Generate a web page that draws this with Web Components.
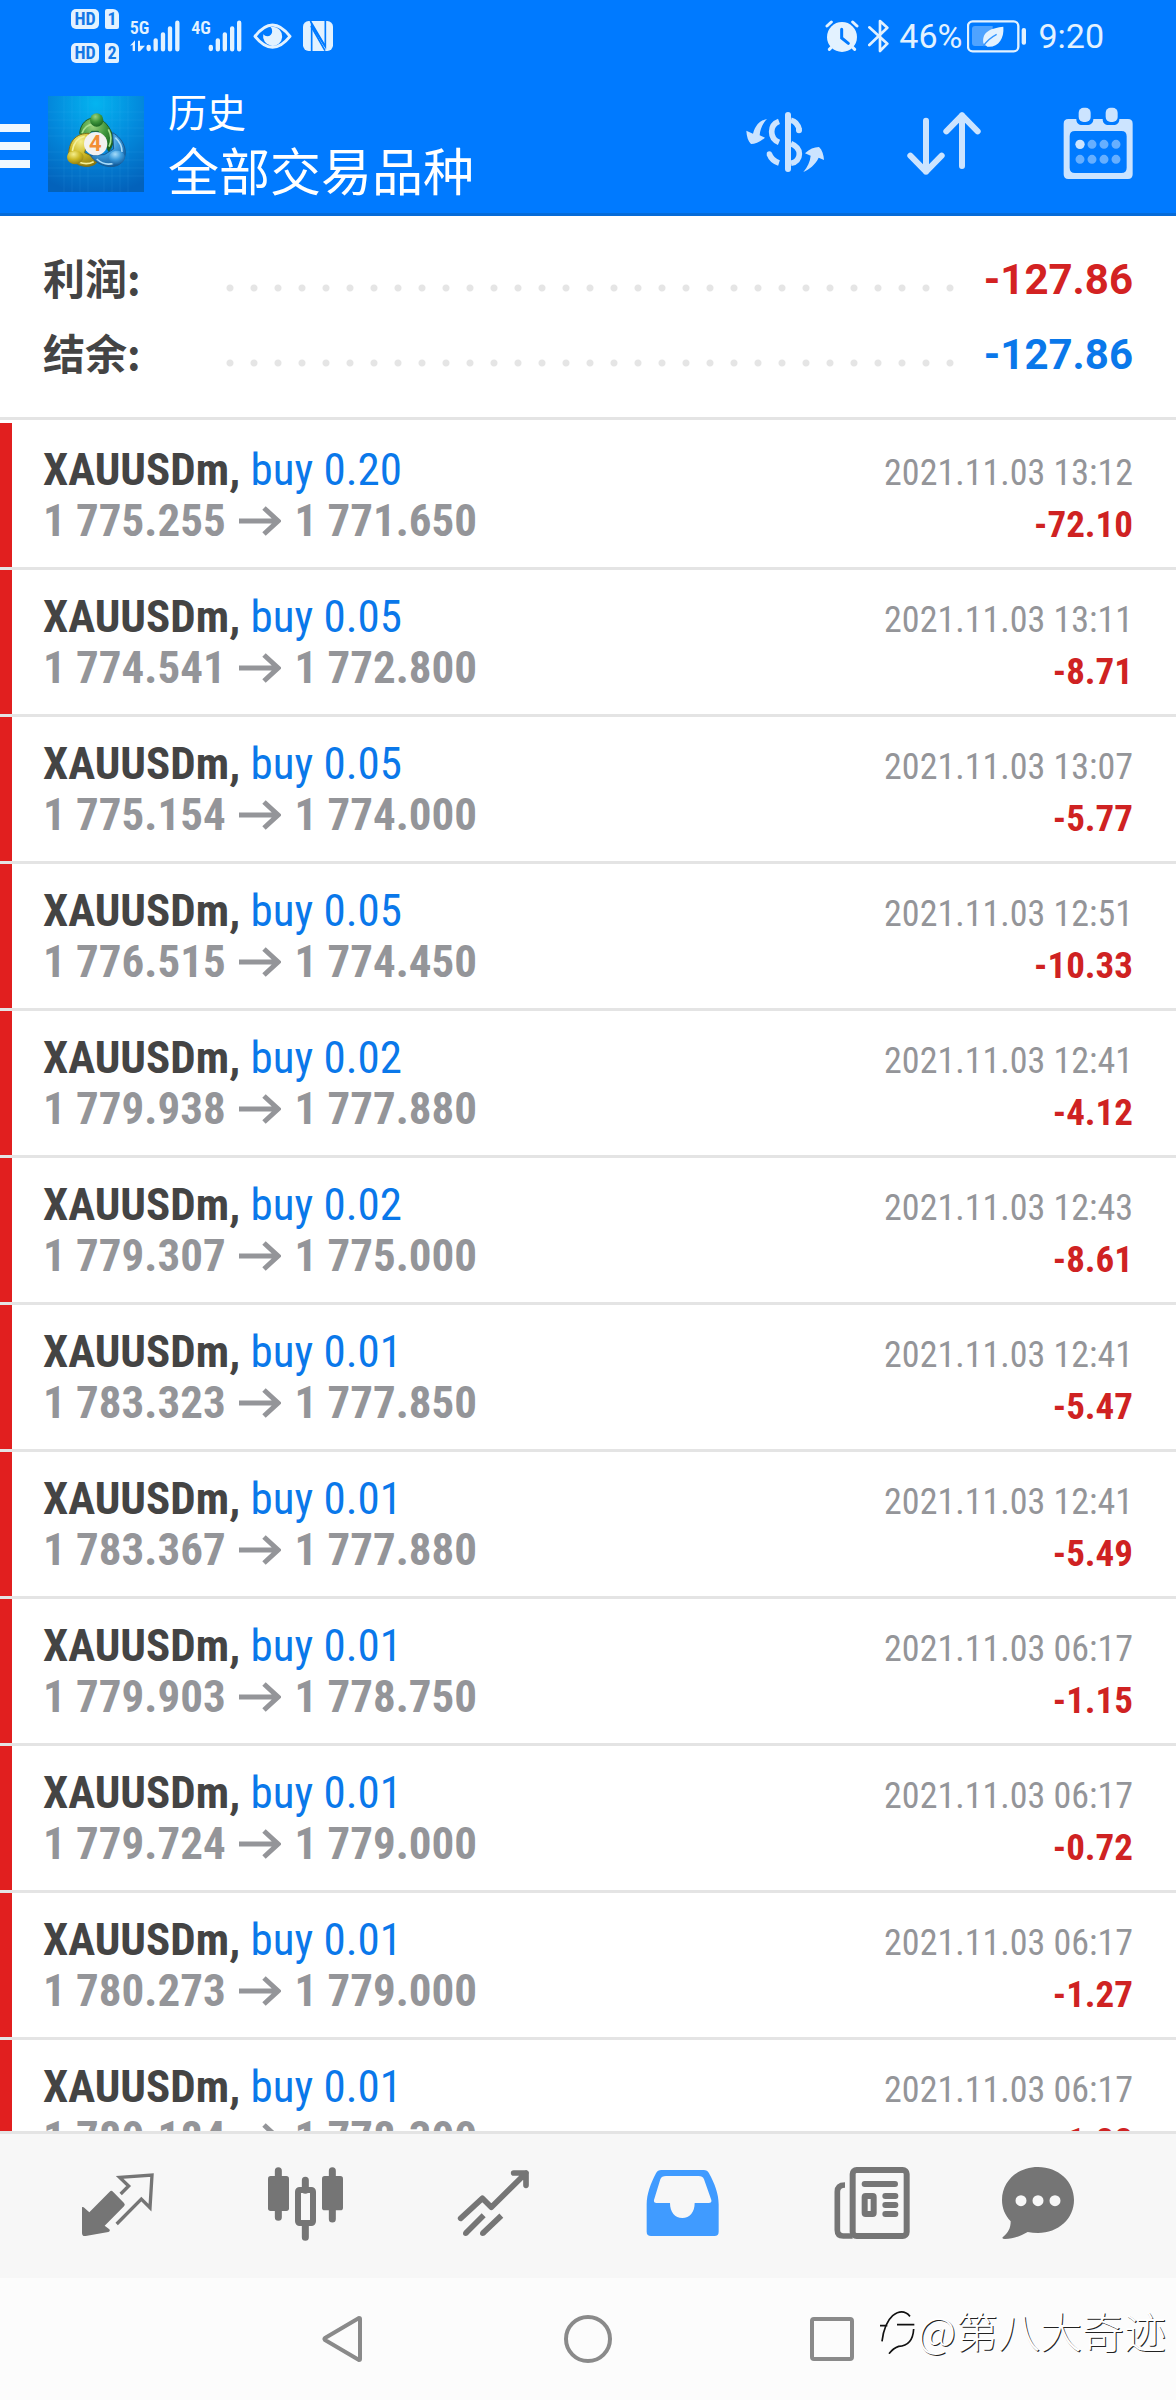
<!DOCTYPE html>
<html lang="zh-CN">
<head>
<meta charset="UTF-8">
<meta name="viewport" content="width=device-width, initial-scale=1.0">
<title>历史</title>
<style>
  body {
    margin: 0;
    background: #fff;
    font-family: "Roboto Condensed", Roboto, "Noto Sans CJK SC", sans-serif;
  }
</style>
</head>
<body>
<history-app></history-app>

<script>
class StatusBar extends HTMLElement {
  connectedCallback() {
    this.attachShadow({ mode: 'open' });
    this.shadowRoot.innerHTML = `
      <style>
        :host {
          display: flex;
          align-items: center;
          justify-content: space-between;
          height: 72px;
          padding: 0 72px 0 71px;
          color: #e3f2ff;
          fill: currentColor;
          font-family: Roboto, sans-serif;
          font-size: 34px;
          line-height: 36px;
        }
        .group {
          display: flex;
          align-items: center;
          gap: 11px;
        }
        .group.right {
          gap: 9px;
        }
        .sims {
          display: grid;
          grid-template-columns: 28px 14px;
          gap: 14px 6px;
        }
        .badge {
          background: currentColor;
          border-radius: 5px;
          height: 20px;
          text-align: center;
        }
        .badge.sim {
          border-radius: 2px 6px 2px 2px;
        }
        .badge b {
          display: block;
          color: #1478e6;
          font-family: "Roboto Condensed", sans-serif;
          font-size: 18px;
          line-height: 20px;
        }
        svg {
          display: block;
          height: 36px;
        }
        text {
          font-family: "Roboto Condensed", sans-serif;
          font-size: 54px;
          font-weight: 600;
        }
        .battery {
          margin: 0 2px 0 -4px;
        }
      </style>
      <div class="group">
        <div class="sims">
          <span class="badge"><b>HD</b></span><span class="badge sim"><b>1</b></span>
          <span class="badge"><b>HD</b></span><span class="badge sim"><b>2</b></span>
        </div>
        <svg width="50" viewBox="393 54 150 108">
          <text x="392" y="102">5G</text>
          <path d="M393 137l15-16v32h-7v-18zM417 122h6v15h15l-15 17h-6z"/>
          <path d="M449 141v6M470 121v27M492 103v45M513 85v63M535 68v80" stroke="currentColor" stroke-width="13" stroke-linecap="round"/>
        </svg>
        <svg width="51" viewBox="574 54 152 108">
          <text x="574" y="102">4G</text>
          <path d="M633 141v6M654 121v27M675 103v45M697 85v63M718 68v80" stroke="currentColor" stroke-width="13" stroke-linecap="round"/>
        </svg>
        <svg width="39" viewBox="757 54 118 108">
          <path d="M763 109q53-69 106 0q-53 66-106 0z" fill="none" stroke="currentColor" stroke-width="9" stroke-linejoin="round"/>
          <path d="M816 80a29 29 0 1 1-28 23q5 6 12 6a15 15 0 0 0 15-16q0-8-5-12z"/>
        </svg>
        <svg width="30" viewBox="908 54 90 108">
          <rect x="908" y="63" width="90" height="90" rx="17"/>
          <path d="M934 153V76l41 64V63" fill="none" stroke="#007aff" stroke-width="5"/>
          <path d="M930 63l44 75M932 78l42 74" stroke="#007aff" stroke-width="5"/>
        </svg>
      </div>
      <div class="group right">
        <svg width="34" viewBox="366 54 102 108">
          <circle cx="417" cy="111" r="45"/>
          <path d="M372 78l13-12M462 78l-13-12M379 148l9-9M455 148l-9-9" stroke="currentColor" stroke-width="9" stroke-linecap="round"/>
          <path d="M416 88v26l20 16" fill="none" stroke="#007aff" stroke-width="9" stroke-linecap="round"/>
        </svg>
        <svg width="22" viewBox="500 54 66 108">
          <path d="M504 82l54 49-22 22V63l22 20-54 52" fill="none" stroke="currentColor" stroke-width="8" stroke-linejoin="round" stroke-linecap="round"/>
        </svg>
        <span>46%</span>
        <svg class="battery" width="60" viewBox="804 54 180 108">
          <rect x="807" y="64" width="151" height="90" rx="14" fill="none" stroke="currentColor" stroke-width="7"/>
          <path d="M828 78h53v60h-53q-9 0-9-9V87q0-9 9-9z" opacity=".35"/>
          <rect x="968" y="84" width="13" height="50" rx="6"/>
          <path d="M853 130c-6-37 27-46 60-50 3 36-15 63-48 60z"/>
          <path d="M853 138q15-22 40-35" fill="none" stroke="#3395ff" stroke-width="4"/>
        </svg>
        <span>9:20</span>
      </div>
    `;
  }
}

class AppHeader extends HTMLElement {
  connectedCallback() {
    this.attachShadow({ mode: 'open' });
    this.shadowRoot.innerHTML = `
      <style>
        :host {
          display: flex;
          align-items: center;
          height: 144px;
          padding-right: 43px;
          box-shadow: inset 0 -3px #066bd8;
          color: #cce4ff;
          font-family: Roboto, "Noto Sans CJK SC", sans-serif;
        }
        button {
          display: block;
          padding: 0;
          border: 0;
          background: none;
          color: inherit;
          cursor: pointer;
        }
        svg {
          display: block;
          fill: currentColor;
        }
        .menu {
          color: #f0f8ff;
          margin-right: 18px;
        }
        .titles {
          flex: 1;
          padding-left: 24px;
          color: #fff;
        }
        h1, p {
          margin: 0;
          font-weight: 400;
          line-height: 60px;
          white-space: nowrap;
        }
        p {
          font-size: 39px;
        }
        h1 {
          font-size: 51px;
        }
        .actions {
          display: flex;
          gap: 81px;
        }
        .stroke {
          fill: none;
          stroke: currentColor;
          stroke-width: 18;
          stroke-linecap: round;
          stroke-linejoin: round;
        }
      </style>
      <button class="menu" aria-label="菜单">
        <svg width="30" height="48" viewBox="0 -4 30 48"><path d="M0 0h30v8H0zM0 18h30v8H0zM0 36h30v8H0z"/></svg>
      </button>
      <svg width="96" height="96" viewBox="24 18 288 288" role="img" aria-label="MetaTrader 4">
        <defs>
          <radialGradient id="bg" cx=".5" cy=".08" r=".95">
            <stop offset="0" stop-color="#04b4f0"/><stop offset=".5" stop-color="#0389dc"/><stop offset="1" stop-color="#0362bb"/>
          </radialGradient>
          <radialGradient id="g" cx=".4" cy=".25" r=".8"><stop offset="0" stop-color="#9bd27c"/><stop offset=".5" stop-color="#3f963c"/><stop offset="1" stop-color="#16601e"/></radialGradient>
          <radialGradient id="y" cx=".4" cy=".25" r=".8"><stop offset="0" stop-color="#f5ee8c"/><stop offset=".5" stop-color="#cdb823"/><stop offset="1" stop-color="#8b7910"/></radialGradient>
          <radialGradient id="b" cx=".4" cy=".25" r=".8"><stop offset="0" stop-color="#a5dcfa"/><stop offset=".5" stop-color="#3b9adb"/><stop offset="1" stop-color="#135b9c"/></radialGradient>
        </defs>
        <rect x="24" y="18" width="288" height="288" fill="url(#bg)"/>
        <path d="M72 18v288M96 18v288M120 18v288M144 18v288M192 18v288M216 18v288M240 18v288M264 18v288M24 66h288M24 90h288M24 114h288M24 138h288M24 186h288M24 210h288M24 234h288M24 258h288" stroke="#5cc4f5" stroke-opacity=".16" stroke-width="2"/>
        <path d="M119 130c3-46 51-62 80-28 24 27 26 61 7 82l-31-60h-20l-20 30z" fill="url(#g)" stroke="#205d28" stroke-width="3"/>
        <path d="M126 130c7-20 22-28 38-27M205 118c9 17 10 36 2 52" fill="none" stroke="#a6df8f" stroke-width="5"/>
        <path d="M86 201c-2-46 21-72 62-71l-14 58 42 21c-8 19-34 26-61 15z" fill="url(#y)" stroke="#7b701c" stroke-width="3"/>
        <path d="M97 183c4-26 16-40 37-44M118 217q24 9 43-2" fill="none" stroke="#f4f099" stroke-width="5"/>
        <path d="M218 128c31 17 48 55 31 84-19 30-75 20-98-16l42-2 28-17z" fill="url(#b)" stroke="#195a91" stroke-width="3"/>
        <path d="M226 143q20 18 20 43M170 207c17 15 37 18 52 12" fill="none" stroke="#a8dcfa" stroke-width="5"/>
        <circle cx="170" cy="90" r="20" fill="url(#g)"/>
        <path d="M88 186q29-9 40 6c8 12-5 31-22 31-22 0-33-22-18-37z" fill="url(#y)"/>
        <path d="M214 188c15-11 37-5 40 10 3 18-16 29-31 25-17-5-23-24-9-35z" fill="url(#b)"/>
        <circle cx="167" cy="161" r="35" fill="#f3f1f0"/>
        <text x="166" y="184" text-anchor="middle" font-family="Roboto" font-size="66" font-weight="700" fill="#f28d35">4</text>
      </svg>
      <div class="titles">
        <p>历史</p>
        <h1>全部交易品种</h1>
      </div>
      <div class="actions">
        <button aria-label="交易品种">
          <svg width="80" height="72" viewBox="138 324 240 216">
            <rect x="258" y="336" width="18" height="180" rx="9"/>
            <path d="M240 364q-22 8-22 31t22 32M211 462q7 20 29 27M276 361c14 3 21 12 25 29M276 431c17 7 25 17 25 31s-9 25-25 28" fill="none" stroke="currentColor" stroke-width="17"/>
            <circle cx="211" cy="462" r="8"/><circle cx="300" cy="391" r="9"/>
            <path d="M204 357c-18 3-34 15-42 44l-20-9c1 17 5 31 14 40 12 0 26-6 42-19l-16-7c1-19 10-37 22-49zM313 516c18-9 35-20 46-43l16 7c-1-15-5-30-15-39-15 0-28 6-42 19l17 7c-2 18-9 34-22 49z"/>
          </svg>
        </button>
        <button aria-label="排序">
          <svg width="76" height="72" viewBox="612 324 228 216">
            <path class="stroke" d="M672 362v153M625 467l47 48 47-48M780 498V346M733 394l47-48 47 48"/>
          </svg>
        </button>
        <button aria-label="日期">
          <svg width="70" height="74" viewBox="1090 318 210 222">
            <path fill-rule="evenodd" d="M1106 354h24c0 12 7 18 18 18h14c11 0 19-6 19-18h28c0 12 7 18 18 18h14c11 0 18-6 18-18h26q14 0 14 14v152q0 14-14 14h-179q-14 0-14-14V368q0-14 14-14zM1126 390q-16 0-16 16v94q0 16 16 16h139q16 0 16-16v-94q0-16-16-16z"/>
            <rect x="1137" y="320" width="36" height="43" rx="15"/><rect x="1218" y="320" width="36" height="43" rx="15"/>
            <circle cx="1141" cy="430" r="14"/>
            <path d="M1177 430h0M1213 430h0M1249 430h0M1141 475h0M1177 475h0M1213 475h0M1249 475h0" stroke="#66afff" stroke-width="27" stroke-linecap="round"/>
          </svg>
        </button>
      </div>
    `;
  }
}

class SummaryRow extends HTMLElement {
  connectedCallback() {
    this.attachShadow({ mode: 'open' });
    this.shadowRoot.innerHTML = `
      <style>
        :host {
          display: flex;
          align-items: center;
          height: 75px;
          padding: 0 43px;
          font-family: Roboto, "Noto Sans CJK SC", sans-serif;
          font-size: 42px;
          font-weight: 700;
          line-height: 69px;
        }
        .label {
          min-width: 175px;
          padding-bottom: 6px;
          color: #444;
          font-family: "Noto Sans CJK SC", sans-serif;
        }
        .dots {
          flex: 1;
          height: 40px;
          margin-right: 24px;
          background: radial-gradient(circle, #e5e5e5 3px, transparent 4px) left bottom / 24px 24px repeat-x;
        }
        .amount {
          color: var(--amount-color, #d32222);
        }
      </style>
      <span class="label">${this.getAttribute('label')}</span>
      <span class="dots"></span>
      <span class="amount"><slot></slot></span>
    `;
  }
}

class TradeRow extends HTMLElement {
  connectedCallback() {
    const get = (name) => this.getAttribute(name);
    this.attachShadow({ mode: 'open' });
    // both columns share a baseline, so the smaller side text drops 3px
    this.shadowRoot.innerHTML = `
      <style>
        :host {
          display: flex;
          flex: none;
          align-items: baseline;
          justify-content: space-between;
          height: 123px;
          padding: 21px 43px 0 31px;
          border-left: 12px solid #e11f1f;
          box-shadow: 0 3px #e4e4e4, -12px 3px #f7cccc;
          margin-bottom: 3px;
          line-height: 51px;
          white-space: nowrap;
        }
        .deal {
          font-size: 45px;
          color: #949599;
        }
        .side {
          font-size: 37px;
          text-align: right;
          color: #949599;
        }
        time {
          font-size: 36px;
        }
        .symbol {
          color: #444;
        }
        .lots {
          color: #0a78ea;
        }
        .arrow {
          display: inline-block;
          width: 42px;
          height: 30px;
          margin: 0 3px;
          fill: none;
          stroke: currentColor;
          stroke-width: 5;
        }
        .profit {
          color: #cf2222;
        }
      </style>
      <div class="deal">
        <div><b class="symbol">${get('symbol')},</b> <span class="lots">${get('side')} ${get('lots')}</span></div>
        <b>${get('open')} <svg class="arrow" viewBox="0 0 42 30"><path d="M0 15h39M25 2l14 13-14 13"/></svg> ${get('close')}</b>
      </div>
      <div class="side">
        <time>${get('time')}</time><br>
        <b class="profit">${get('profit')}</b>
      </div>
    `;
  }
}

class TabBar extends HTMLElement {
  connectedCallback() {
    this.attachShadow({ mode: 'open' });
    this.shadowRoot.innerHTML = `
      <style>
        :host {
          display: block;
          border-top: 3px solid #e4e4e4;
          background: #f7f7f7;
        }
        nav {
          display: flex;
          align-items: center;
          justify-content: space-between;
          height: 144px;
          padding: 0 70px;
        }
        button {
          padding: 0;
          border: 0;
          background: none;
          color: #757575;
          cursor: pointer;
        }
        .active {
          color: #409bff;
        }
        svg {
          display: block;
          width: 96px;
          height: 96px;
          fill: currentColor;
          overflow: visible;
        }
        .line {
          fill: none;
          stroke: currentColor;
        }
      </style>
      <nav>
        <button aria-label="行情">
          <svg viewBox="30 54 288 288">
            <path d="M66 201l5 1 17 15 61-62q5-5 10 0l33 34q5 5 0 10l-58 58 14 11q4 5-3 8l-68 12q-11 2-11-9z"/>
            <path class="line" stroke-width="10" d="M182 162l24-24-27-26 97-7-6 98-26-26-74 75" stroke-linejoin="miter"/>
          </svg>
        </button>
        <button aria-label="图表">
          <svg viewBox="594 54 288 288">
            <path class="line" stroke-width="21" stroke-linecap="round" d="M655 92v140M736 121v30M736 255v37M817 92v145"/>
            <rect x="624" y="108" width="63" height="105" rx="8"/><rect x="786" y="108" width="63" height="103" rx="8"/>
            <rect class="line" x="714" y="150" width="45" height="99" rx="5" stroke-width="18"/>
          </svg>
        </button>
        <button aria-label="交易">
          <svg viewBox="48 54 288 288">
            <path class="line" stroke-width="17" stroke-linecap="round" stroke-linejoin="round" d="M92 235l65-60 27 27 104-103M251 99h37v37"/>
            <path class="line" stroke-width="17" d="M107 280l54-54M158 280l56-53"/>
            <circle cx="107" cy="280" r="8"/><circle cx="158" cy="280" r="8"/>
          </svg>
        </button>
        <button class="active" aria-label="历史" aria-current="page">
          <svg viewBox="612 54 288 288">
            <path fill-rule="evenodd" d="M694 90h127q11 0 16 10c17 31 29 62 29 93v82q0 13-13 13H663q-13 0-13-13v-82c0-31 12-62 28-93q5-10 16-10zM708 108q-13 0-17 10l-19 62q-2 9 8 9h40c0 27 15 45 37 45s37-18 37-45h42q10 0 8-9l-22-62q-4-10-16-10z"/>
          </svg>
        </button>
        <button aria-label="新闻">
          <svg viewBox="36 54 288 288">
            <rect class="line" x="128" y="90" width="162" height="198" rx="12" stroke-width="18"/>
            <path class="line" stroke-width="17" d="M105 135c-15 0-23 7-23 20v115q0 18 18 18h28"/>
            <path class="line" stroke-width="18" stroke-linecap="round" d="M164 132h91M226 168h30M226 195h30M226 222h30"/>
            <rect class="line" x="164" y="168" width="27" height="54" rx="3" stroke-width="18"/>
          </svg>
        </button>
        <button aria-label="聊天">
          <svg viewBox="600 54 288 288">
            <path d="M684 81c61 0 108 43 108 99s-47 99-108 99q-16 0-31-3c-22 13-44 20-68 21q-10 0-7-5c17-14 24-27 24-48-17-18-26-40-26-64 0-56 47-99 108-99z"/>
            <path d="M633 182h0M684 182h0M735 182h0" stroke="#f7f7f7" stroke-width="33" stroke-linecap="round"/>
          </svg>
        </button>
      </nav>
    `;
  }
}

class SystemNav extends HTMLElement {
  connectedCallback() {
    this.attachShadow({ mode: 'open' });
    this.shadowRoot.innerHTML = `
      <style>
        :host {
          display: flex;
          align-items: center;
          justify-content: center;
          gap: 196px;
          position: relative;
          height: 122px;
          background: #fcfcfc;
        }
        button {
          padding: 0;
          border: 0;
          background: none;
          cursor: pointer;
        }
        svg {
          display: block;
          fill: none;
          stroke: #8a8a8a;
          stroke-width: 4;
          stroke-linejoin: round;
        }
        .credit {
          position: absolute;
          right: 10px;
          bottom: 40px;
          display: flex;
          align-items: center;
          gap: 3px;
          color: #fff;
          font-family: "Noto Sans CJK SC", sans-serif;
          font-size: 42px;
          font-weight: 300;
          line-height: 60px;
          text-shadow: 1px 1px 0 #222;
        }
        .credit svg {
          stroke: #111;
          stroke-width: 5;
        }
      </style>
      <button aria-label="返回"><svg width="48" height="48" viewBox="0 0 48 48"><path d="M40 4v40q0 1-1 1L5 25q-1-1 0-2L39 3q1 0 1 1z"/></svg></button>
      <button aria-label="主页"><svg width="48" height="48" viewBox="0 0 48 48"><circle cx="24" cy="24" r="22"/></svg></button>
      <button aria-label="最近任务"><svg width="48" height="48" viewBox="0 0 48 48"><rect x="4" y="4" width="40" height="40" rx="2"/></svg></button>
      <div class="credit">
        <svg width="36" height="48" viewBox="28 38 108 144"><path d="M31 97h22M82 94h52M37 144q7-55 32-77 30-23 52 2M132 107c-2 36-20 51-45 52q-16 5-29 22"/></svg>
        <span>@第八大奇迹</span>
      </div>
    `;
  }
}

const trades = [
  ['0.20', '1 775.255', '1 771.650', '13:12', '-72.10'],
  ['0.05', '1 774.541', '1 772.800', '13:11', '-8.71'],
  ['0.05', '1 775.154', '1 774.000', '13:07', '-5.77'],
  ['0.05', '1 776.515', '1 774.450', '12:51', '-10.33'],
  ['0.02', '1 779.938', '1 777.880', '12:41', '-4.12'],
  ['0.02', '1 779.307', '1 775.000', '12:43', '-8.61'],
  ['0.01', '1 783.323', '1 777.850', '12:41', '-5.47'],
  ['0.01', '1 783.367', '1 777.880', '12:41', '-5.49'],
  ['0.01', '1 779.903', '1 778.750', '06:17', '-1.15'],
  ['0.01', '1 779.724', '1 779.000', '06:17', '-0.72'],
  ['0.01', '1 780.273', '1 779.000', '06:17', '-1.27'],
  ['0.01', '1 780.184', '1 778.300', '06:17', '-1.88'],
];

class HistoryApp extends HTMLElement {
  connectedCallback() {
    this.attachShadow({ mode: 'open' });
    this.shadowRoot.innerHTML = `
      <style>
        :host {
          display: flex;
          flex-direction: column;
          height: 100vh;
        }
        header {
          background: #007aff;
        }
        .summary {
          padding: 26px 0 25px;
          border-bottom: 3px solid #e4e4e4;
        }
        .balance {
          --amount-color: #0a78ea;
        }
        .list {
          display: flex;
          flex: 1;
          flex-direction: column;
          min-height: 0;
          padding-top: 3px;
          overflow: hidden;
        }
      </style>
      <header>
        <status-bar></status-bar>
        <app-header></app-header>
      </header>
      <section class="summary">
        <summary-row label="利润:">-127.86</summary-row>
        <summary-row class="balance" label="结余:">-127.86</summary-row>
      </section>
      <main class="list">
        ${trades.map(([lots, open, close, time, profit]) => `
          <trade-row symbol="XAUUSDm" side="buy" lots="${lots}" open="${open}" close="${close}"
            time="2021.11.03 ${time}" profit="${profit}"></trade-row>`).join('')}
      </main>
      <tab-bar></tab-bar>
      <system-nav></system-nav>
    `;
  }
}

customElements.define('status-bar', StatusBar);
customElements.define('app-header', AppHeader);
customElements.define('summary-row', SummaryRow);
customElements.define('trade-row', TradeRow);
customElements.define('tab-bar', TabBar);
customElements.define('system-nav', SystemNav);
customElements.define('history-app', HistoryApp);
</script>
</body>
</html>
